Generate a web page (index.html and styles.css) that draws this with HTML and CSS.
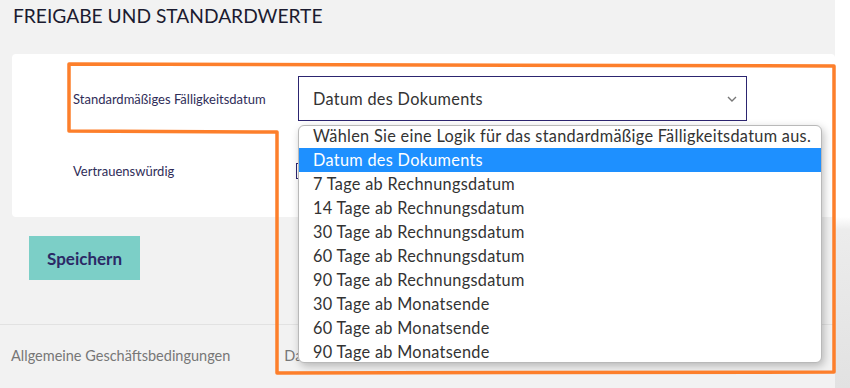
FILE: index.html
```html
<!DOCTYPE html>
<html lang="de">
<head>
  <meta charset="UTF-8">
  <meta name="viewport" content="width=device-width, initial-scale=1.0">
  <title>Freigabe und Standardwerte</title>
  <link rel="stylesheet" href="styles.css">
</head>
<body>
  <div class="page">
    <main class="main">
      <h1 class="title">FREIGABE UND STANDARDWERTE</h1>

      <section class="card">
        <div class="row row-first">
          <label class="label" for="due">Standardmäßiges Fälligkeitsdatum</label>
          <div class="select" id="due">
            <span>Datum des Dokuments</span>
            <svg class="chevron" width="10" height="6" viewBox="0 0 10 6">
              <path d="M1 1 L5 5 L9 1" fill="none" stroke="#777" stroke-width="1.4"/>
            </svg>
          </div>
        </div>
        <div class="row">
          <label class="label">Vertrauenswürdig</label>
          <span class="check"></span>
        </div>
      </section>

      <button class="save">Speichern</button>

      <footer class="footer">
        <a>Allgemeine Geschäftsbedingungen</a>
        <a>Datenschutz</a>
      </footer>

      <ul class="dropdown">
        <li>Wählen Sie eine Logik für das standardmäßige Fälligkeitsdatum aus.</li>
        <li class="active">Datum des Dokuments</li>
        <li>7 Tage ab Rechnungsdatum</li>
        <li>14 Tage ab Rechnungsdatum</li>
        <li>30 Tage ab Rechnungsdatum</li>
        <li>60 Tage ab Rechnungsdatum</li>
        <li>90 Tage ab Rechnungsdatum</li>
        <li>30 Tage ab Monatsende</li>
        <li>60 Tage ab Monatsende</li>
        <li>90 Tage ab Monatsende</li>
      </ul>
    </main>
    <div class="side"></div>

    <!-- hand drawn highlight -->
    <svg class="mark" width="850" height="388" viewBox="0 0 850 388">
      <path d="M69 64 L834 66 L834 372 L277 373 L277 132 L69 131 Z" fill="none" stroke="#fd7f2b" stroke-width="3.5" stroke-linejoin="round"/>
    </svg>
  </div>
</body>
</html>
```

FILE: styles.css
```css
body {
  margin: 0;
  font-family: Lato, "Open Sans", sans-serif;
  background-color: #f2f2f2;
}
.page {
  display: flex;
  position: relative;
  height: 388px;
  overflow: hidden;
}
.main {
  position: relative;
  width: 835px;
  flex: none;
}
.side {
  flex: 1;
  background: linear-gradient(#ffffff 0, #ffffff 217px, #ececec 230px, #e2e2e2 388px);
}
.title {
  margin: 4px 0 0 13px;
  font-size: 19.2px;
  line-height: 24px;
  font-weight: 400;
  color: #1b1b30;
}
.card {
  margin: 26px 0 0 12px;
  height: 163px;
  box-sizing: border-box;
  padding: 22px 0 0 61px;
  background-color: #fff;
  border-radius: 4px;
}
.row {
  display: flex;
  align-items: center;
}
.row-first {
  margin-bottom: 27px;
}
.label {
  width: 225px;
  font-size: 13px;
  color: #2f2d58;
}
.select {
  width: 449px;
  height: 45px;
  box-sizing: border-box;
  border: 1px solid #2c2570;
  display: flex;
  align-items: center;
  justify-content: space-between;
  padding: 0 9px 0 14px;
  font-size: 16.3px;
  letter-spacing: 0.3px;
  color: #333;
}
.row:last-child {
  height: 45px;
}
.check {
  width: 14px;
  height: 14px;
  border: 1px solid #2c2570;
  margin-left: -2px;
}
.save {
  margin: 19px 0 0 29px;
  width: 111px;
  height: 44px;
  border: none;
  background-color: #7ccfc7;
  color: #2b2a66;
  font-family: inherit;
  font-size: 17px;
  font-weight: 700;
}
.footer {
  margin-top: 44px;
  border-top: 1px solid #e2e2e2;
  padding: 22px 0 0 11px;
  display: flex;
  gap: 54px;
  font-size: 14.5px;
  color: #777;
}
.dropdown {
  position: absolute;
  left: 298px;
  top: 125px;
  width: 524px;
  margin: 0;
  padding: 0;
  list-style: none;
  background-color: #fff;
  border: 1px solid #b9b9b9;
  border-radius: 6px;
  box-shadow: 2px 3px 8px rgba(0, 0, 0, 0.25);
  box-sizing: border-box;
  font-size: 16.3px;
  letter-spacing: 0.3px;
  color: #333;
}
.dropdown li {
  height: 24px;
  line-height: 24px;
  padding-left: 14px;
  white-space: nowrap;
}
.dropdown li:first-child {
  height: 22px;
  line-height: 20px;
}
.dropdown li:last-child {
  height: 22px;
}
.dropdown li.active {
  background-color: #1e90ff;
  color: #fff;
}
.mark {
  position: absolute;
  left: 0;
  top: 0;
  pointer-events: none;
}
```
